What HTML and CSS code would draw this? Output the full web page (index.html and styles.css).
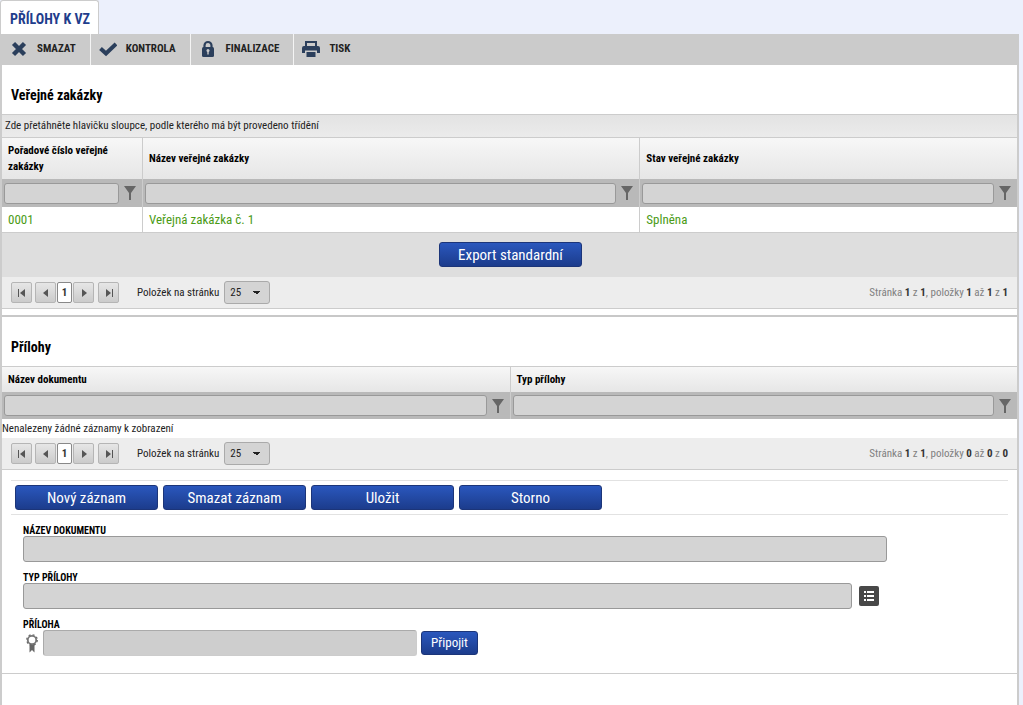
FILE: index.html
```html
<!DOCTYPE html>
<html lang="cs">
<head>
<meta charset="utf-8">
<meta name="viewport" content="width=device-width, initial-scale=1">
<title>Přílohy k VZ</title>
<link rel="stylesheet" href="styles.css">
</head>
<body>
<svg class="sprite" aria-hidden="true">
  <symbol id="funnel" viewBox="0 0 12 14"><path d="M0 0h12L7 7v7H5V7z"/></symbol>
  <symbol id="first" viewBox="0 0 8 8"><path d="M0 0h1v8H0zM7 0v8L2 4z"/></symbol>
  <symbol id="prev" viewBox="0 0 8 8"><path d="M6 0v8L1 4z"/></symbol>
  <symbol id="next" viewBox="0 0 8 8"><path d="M2 0v8l5-4z"/></symbol>
  <symbol id="last" viewBox="0 0 8 8"><path d="M7 0h1v8H7zM1 0v8l5-4z"/></symbol>
</svg>
<div class="page">
  <nav class="tabs"><a class="tab" href="#prilohy">PŘÍLOHY K VZ</a></nav>
  <div class="toolbar">
    <button class="tool" type="button"><svg class="tool-icon" viewBox="0 0 18 18"><path d="M3.500 3.500l11 11M14.500 3.500l-11 11" fill="none" stroke="#2b3f5c" stroke-width="4.400"/></svg><span>SMAZAT</span></button>
    <button class="tool" type="button"><svg class="tool-icon" viewBox="0 0 18 18"><path d="M1.500 8.500l5.500 5L17 4" fill="none" stroke="#2b3f5c" stroke-width="4"/></svg><span>KONTROLA</span></button>
    <button class="tool" type="button"><svg class="tool-icon" viewBox="0 0 18 18"><path d="M5.500 8V5.500a3.500 3.500 0 0 1 7 0V8" fill="none" stroke="#2b3f5c" stroke-width="2.200"/><rect x="3" y="7" width="12" height="10" rx="1.500" fill="#2b3f5c"/><circle cx="9" cy="10.500" r="1.500" fill="#ccc"/><path d="M8.300 11h1.400v3.500H8.300z" fill="#ccc"/></svg><span>FINALIZACE</span></button>
    <button class="tool" type="button"><svg class="tool-icon" viewBox="0 0 18 18"><path d="M4 6V2h10v4" fill="none" stroke="#2b3f5c" stroke-width="2"/><path d="M2 6h14a2 2 0 0 1 2 2v5h-3v-2.500H3V13H0V8a2 2 0 0 1 2-2z" fill="#2b3f5c"/><path d="M4.500 12h9v5h-9z" fill="#2b3f5c"/></svg><span>TISK</span></button>
  </div>
  <main class="panel" id="prilohy">
    <section class="block">
      <h2 class="title">Veřejné zakázky</h2>
      <div class="group-bar">Zde přetáhněte hlavičku sloupce, podle kterého má být provedeno třídění</div>
      <table class="grid">
        <colgroup><col class="col-number"><col class="col-name"><col></colgroup>
        <thead>
          <tr class="head head-tall"><th>Pořadové číslo veřejné zakázky</th><th>Název veřejné zakázky</th><th>Stav veřejné zakázky</th></tr>
          <tr class="filters">
            <td><div class="filter"><input type="text" aria-label="Filtr: Pořadové číslo"><button type="button" aria-label="Filtrovat"><svg><use href="#funnel"/></svg></button></div></td>
            <td><div class="filter"><input type="text" aria-label="Filtr: Název"><button type="button" aria-label="Filtrovat"><svg><use href="#funnel"/></svg></button></div></td>
            <td><div class="filter"><input type="text" aria-label="Filtr: Stav"><button type="button" aria-label="Filtrovat"><svg><use href="#funnel"/></svg></button></div></td>
          </tr>
        </thead>
        <tbody><tr class="record"><td>0001</td><td>Veřejná zakázka č. 1</td><td>Splněna</td></tr></tbody>
      </table>
      <div class="export"><button class="btn" type="button">Export standardní</button></div>
      <div class="pager">
        <button class="pg" type="button" aria-label="První"><svg><use href="#first"/></svg></button>
        <button class="pg pg-prev" type="button" aria-label="Předchozí"><svg><use href="#prev"/></svg></button>
        <button class="pg pg-current" type="button">1</button>
        <button class="pg pg-next" type="button" aria-label="Další"><svg><use href="#next"/></svg></button>
        <button class="pg" type="button" aria-label="Poslední"><svg><use href="#last"/></svg></button>
        <label class="size-label" for="size1">Položek na stránku</label>
        <select class="size" id="size1"><option>25</option></select>
        <span class="info">Stránka <b>1</b> z <b>1</b>, položky <b>1</b> až <b>1</b> z <b>1</b></span>
      </div>
    </section>
    <section class="block block-next">
      <h2 class="title">Přílohy</h2>
      <table class="grid grid-docs">
        <thead>
          <tr class="head"><th>Název dokumentu</th><th>Typ přílohy</th></tr>
          <tr class="filters">
            <td><div class="filter"><input type="text" aria-label="Filtr: Název dokumentu"><button type="button" aria-label="Filtrovat"><svg><use href="#funnel"/></svg></button></div></td>
            <td><div class="filter"><input type="text" aria-label="Filtr: Typ přílohy"><button type="button" aria-label="Filtrovat"><svg><use href="#funnel"/></svg></button></div></td>
          </tr>
        </thead>
      </table>
      <p class="empty">Nenalezeny žádné záznamy k zobrazení</p>
      <div class="pager">
        <button class="pg" type="button" aria-label="První"><svg><use href="#first"/></svg></button>
        <button class="pg pg-prev" type="button" aria-label="Předchozí"><svg><use href="#prev"/></svg></button>
        <button class="pg pg-current" type="button">1</button>
        <button class="pg pg-next" type="button" aria-label="Další"><svg><use href="#next"/></svg></button>
        <button class="pg" type="button" aria-label="Poslední"><svg><use href="#last"/></svg></button>
        <label class="size-label" for="size2">Položek na stránku</label>
        <select class="size" id="size2"><option>25</option></select>
        <span class="info">Stránka <b>1</b> z <b>1</b>, položky <b>0</b> až <b>0</b> z <b>0</b></span>
      </div>
    </section>
    <form class="form">
      <div class="actions">
        <button class="btn" type="button">Nový záznam</button>
        <button class="btn" type="button">Smazat záznam</button>
        <button class="btn" type="button">Uložit</button>
        <button class="btn" type="button">Storno</button>
      </div>
      <div class="fields">
        <div class="field"><label for="doc">NÁZEV DOKUMENTU</label><div class="row"><input id="doc" type="text"></div></div>
        <div class="field"><label for="type">TYP PŘÍLOHY</label><div class="row"><input id="type" type="text"><button class="list-btn" type="button" aria-label="Vybrat"><svg viewBox="0 0 20 20"><path d="M5 5h2v2H5zm3 0h7v2H8zM5 9h2v2H5zm3 0h7v2H8zM5 13h2v2H5zm3 0h7v2H8z" fill="#fff"/></svg></button></div></div>
        <div class="field"><label for="file">PŘÍLOHA</label><div class="row row-file"><svg class="ribbon" viewBox="0 0 12 19"><path d="M3.500 10h5v8.500L6 16l-2.500 2.500z" fill="#666"/><circle cx="6" cy="6" r="4.200" fill="#fff" stroke="#777" stroke-width="1.800"/><circle cx="6" cy="6" r="5.300" fill="none" stroke="#666" stroke-width="1.200" stroke-dasharray="2 2.160"/></svg><input id="file" type="text" readonly><button class="btn btn-small" type="button">Připojit</button></div></div>
      </div>
    </form>
  </main>
</div>
</body>
</html>
```
FILE: styles.css
```css
* { box-sizing: border-box; }
body {
  margin: 0;
  background: #ecf0fc;
  color: #222;
  font: 11px/16px "Roboto Condensed", "Liberation Sans Narrow", Roboto, sans-serif;
}
button, input, select { font: inherit; margin: 0; }
.sprite { display: none; }
.page { display: flex; flex-direction: column; min-height: 100vh; margin-right: 4px; }

.tabs { display: flex; height: 34px; }
.tab {
  padding: 8px 8px 0 9px;
  border: 1px solid #ccc;
  border-bottom: 0;
  border-radius: 3px 3px 0 0;
  background: #fff;
  color: #1f3d8c;
  font-size: 14px;
  line-height: 20px;
  font-weight: 700;
  text-decoration: none;
}
.toolbar { display: flex; height: 31px; padding-left: 2px; background: #cbcbcb; }
.tool {
  display: flex;
  align-items: center;
  gap: 9px;
  padding: 0 14px 1px 8px;
  border: 0;
  border-right: 1px solid #f4f4f4;
  background: none;
  color: #222;
  font-weight: 700;
}
.tool:last-child { border: 0; }
.tool-icon { width: 18px; height: 18px; }

.panel { flex: 1; border: solid #ccc; border-width: 0 2px; background: #fff; }
.title {
  margin: 0;
  padding: 20px 9px 0;
  height: 49px;
  color: #000;
  font-size: 14px;
  line-height: 20px;
}
.block-next { margin-top: 6px; border-top: 2px solid #c8c8c8; }
.group-bar {
  height: 23px;
  padding: 3px;
  border-top: 1px solid #ccc;
  background: linear-gradient(#e3e3e3, #ebebeb);
}
.grid { width: 100%; border-collapse: separate; border-spacing: 0; table-layout: fixed; }
.col-number { width: 140px; }
.col-name { width: 49%; }
.grid th, .grid td { padding: 0; border-left: 1px solid #ccc; text-align: left; }
.grid th:first-child, .grid td:first-child { border-left: 0; }
.head th {
  height: 26px;
  padding: 0 6px;
  border-top: 1px solid #ccc;
  background: linear-gradient(#f7f7f7, #e6e6e6);
  color: #000;
}
.head-tall th { height: 42px; }
.filters { background: #b9b9b9; }
.filter { display: flex; align-items: center; height: 28px; padding-left: 2px; }
.grid-docs .filter { height: 27px; }
.filter input {
  flex: 1;
  min-width: 0;
  height: 21px;
  border: 1px solid #999;
  border-radius: 3px;
  background: #d4d4d4;
}
.filter button { width: 23px; height: 20px; padding: 3px 5px; border: 0; background: none; }
.filter svg { display: block; width: 12px; height: 14px; fill: #666; }
.record td { height: 26px; padding: 0 6px; border-bottom: 1px solid #ccc; color: #4b9b16; font-size: 13px; }

.export { display: flex; justify-content: center; height: 44px; padding: 9px 0 0 2px; background: #dedede; }
.btn {
  width: 143px;
  height: 25px;
  padding: 0;
  border: 1px solid #1c3579;
  border-radius: 3px;
  background: linear-gradient(#2a57bd, #1c3c8c);
  color: #fff;
  font-size: 15px;
}
.pager { display: flex; align-items: center; height: 32px; padding: 0 9px; border-bottom: 1px solid #ccc; background: #ededed; }
.pg {
  display: flex;
  align-items: center;
  justify-content: center;
  width: 21px;
  height: 21px;
  padding: 0;
  border: 1px solid #b5b5b5;
  border-radius: 2px;
  background: linear-gradient(#e6e6e6, #cbcbcb);
  color: #333;
}
.pg svg { width: 8px; height: 8px; fill: #555; }
.pg-prev { margin: 0 1px 0 3px; }
.pg-current { width: 15px; background: #fff; border-color: #888; font-weight: 700; }
.pg-next { margin: 0 4px 0 1px; }
.size-label { margin: 0 5px 0 18px; }
.size {
  width: 46px;
  height: 23px;
  padding: 0 5px;
  border: 1px solid #aaa;
  border-radius: 3px;
  appearance: none;
  background: linear-gradient(135deg, #222 50%, transparent 50%) 32px 9px / 4px 4px no-repeat, linear-gradient(225deg, #222 50%, transparent 50%) 28px 9px / 4px 4px no-repeat, #d4d4d4;
  color: #222;
}
.info { margin-left: auto; color: #808080; }
.info b { color: #333; }
.empty { margin: 0; padding: 2px 0 1px; }

.form { padding: 10px 9px 17px; border-bottom: 1px solid #ccc; }
.actions { display: flex; gap: 5px; height: 35px; padding: 4px; border: solid #e2e2e2; border-width: 1px 0; }
.fields { display: flex; flex-direction: column; gap: 7px; padding: 7px 121px 0 12px; }
.field label { display: block; height: 14px; color: #000; font-size: 10px; line-height: 17px; font-weight: 700; }
.row { display: flex; align-items: center; gap: 7px; }
.row input { flex: 1; min-width: 0; height: 26px; border: 1px solid #999; border-radius: 3px; background: #d4d4d4; }
.list-btn { width: 20px; height: 20px; margin-right: 8px; padding: 0; border: 0; border-radius: 2px; background: #484848; }
.list-btn svg { display: block; }
.row-file { gap: 4px; }
.row .ribbon { width: 12px; height: 19px; margin: 0 1px 0 3px; }
.row-file input { flex: 0 1 374px; border-color: #aaa #ccc #ccc #aaa; background: #cecece; }
.btn-small { width: 57px; height: 24px; font-size: 13px; }
```
